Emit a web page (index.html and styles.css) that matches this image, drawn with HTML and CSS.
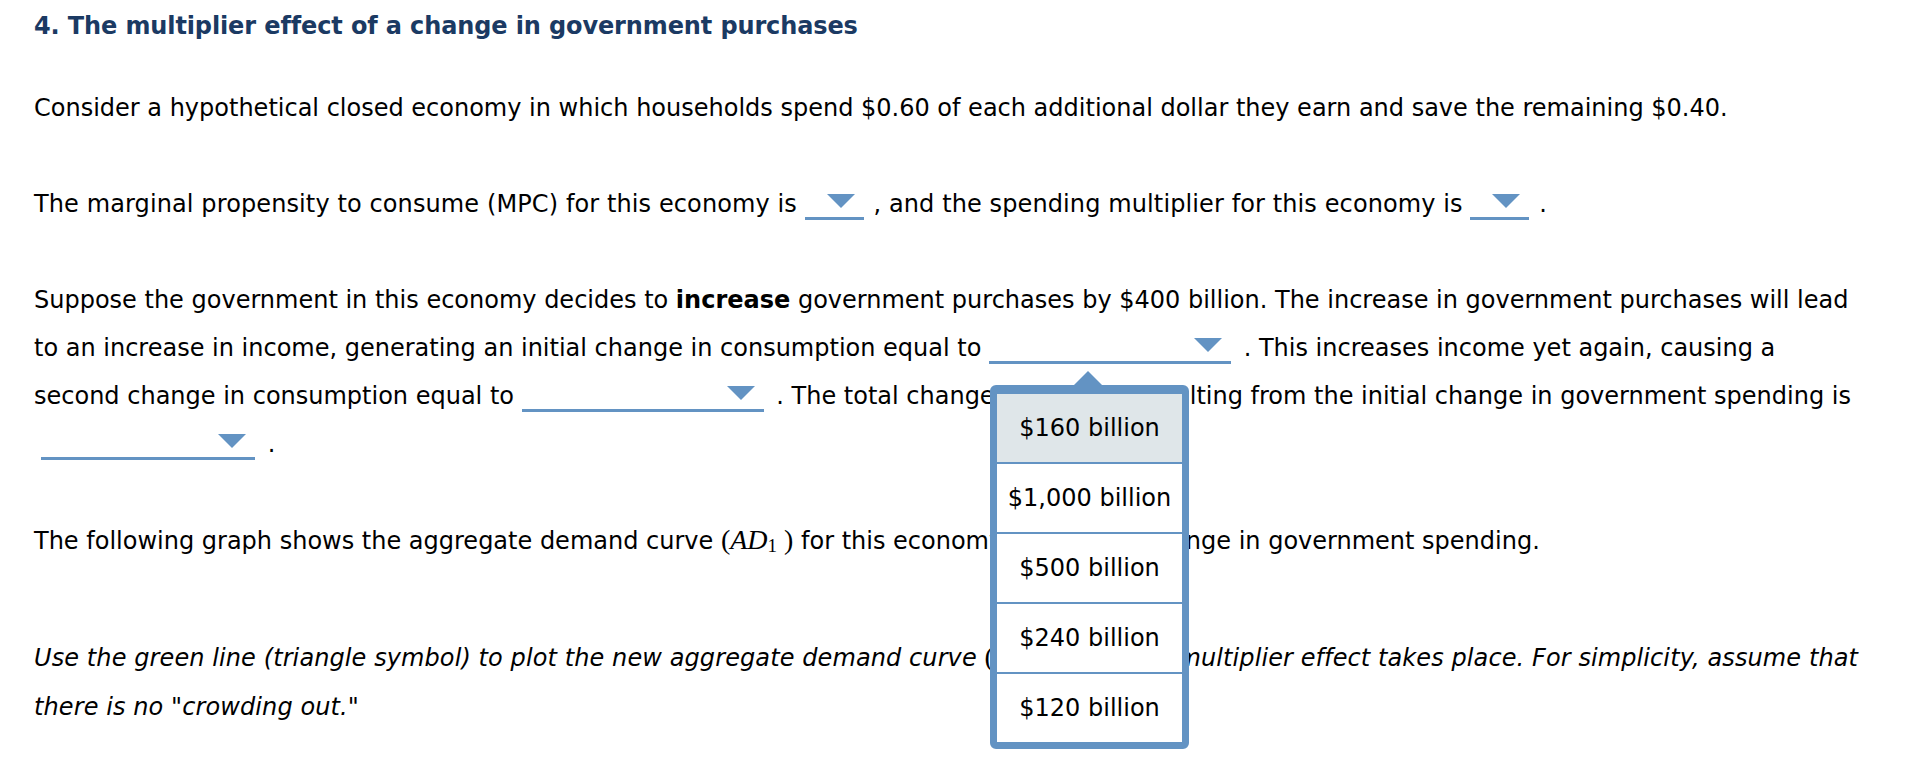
FILE: index.html
```html
<!DOCTYPE html>
<html lang="en">
<head>
<meta charset="utf-8">
<title>The multiplier effect of a change in government purchases</title>
<link rel="stylesheet" href="styles.css">
</head>
<body>
<main class="question">
  <h1 class="title">4. The multiplier effect of a change in government purchases</h1>

  <p class="para">Consider a hypothetical closed economy in which households spend $0.60 of each additional dollar they earn and save the remaining $0.40.</p>

  <p class="para para-mpc">The marginal propensity to consume (MPC) for this economy is <span class="dd dd-short"><span class="caret"></span></span> , and the spending multiplier for this economy is <span class="dd dd-short"><span class="caret"></span></span> .</p>

  <p class="para">Suppose the government in this economy decides to <b>increase</b> government purchases by $400 billion. The increase in government purchases will lead<br>to an increase in income, generating an initial change in consumption equal to <span class="dd dd-long dd-open"><span class="caret"></span><span class="popup"><span class="popup-arrow"></span><span class="opt opt-hover">$160 billion</span><span class="opt">$1,000 billion</span><span class="opt">$500 billion</span><span class="opt">$240 billion</span><span class="opt">$120 billion</span></span></span> . This increases income yet again, causing a<br>second change in consumption equal to <span class="dd dd-long"><span class="caret"></span></span> . The total change in demand resulting from the initial change in government spending is<br><span class="dd dd-mid"><span class="caret"></span></span> .</p>

  <p class="para">The following graph shows the aggregate demand curve <span class="math">(<i>AD</i><sub>1</sub><span class="math-close">)</span></span> for this economy before the change in government spending.</p>

  <p class="para para-italic">Use the green line (triangle symbol) to plot the new aggregate demand curve <span class="math">(<i>AD</i><sub>2</sub><span class="math-close">)</span></span> after the multiplier effect takes place. For simplicity, assume that<br>there is no "crowding out."</p>
</main>
</body>
</html>
```

FILE: styles.css
```css
html, body {
  margin: 0;
  padding: 0;
  background: #ffffff;
}

body {
  font-family: "DejaVu Sans", Verdana, sans-serif;
  font-size: 24px;
  color: #000000;
}

.question {
  padding: 2px 0 0 34px;
}

.title {
  margin: 0 0 34px 0;
  font-size: 24px;
  line-height: 48px;
  font-weight: bold;
  letter-spacing: -0.12px;
  color: #1b3a63;
}

.para {
  margin: 0 0 48px 0;
  line-height: 48px;
  white-space: nowrap;
}

.para-mpc {
  letter-spacing: 0.11px;
}

.para-italic {
  font-style: italic;
  margin-top: 67px;
  line-height: 49px;
  letter-spacing: 0.095px;
}

.para b {
  font-weight: bold;
}

.math {
  font-style: normal;
  font-family: "Liberation Serif", "Times New Roman", serif;
  font-size: 28px;
  letter-spacing: 0;
}

.math i {
  font-style: italic;
}

.math sub {
  font-size: 19px;
  vertical-align: -3px;
  line-height: 0;
}

.math-close {
  padding-left: 7px;
}

.dd {
  display: inline-flex;
  justify-content: flex-end;
  align-items: flex-start;
  box-sizing: border-box;
  height: 26px;
  padding-right: 9px;
  margin-right: 5px;
  border-bottom: 3px solid #6393c3;
  vertical-align: 4px;
  position: relative;
}

.dd-short { width: 59px; margin-right: 2px; }
.dd-long { width: 242px; }
.dd-mid { width: 214px; margin-left: 7px; }

.caret {
  width: 0;
  height: 0;
  border-left: 14px solid transparent;
  border-right: 14px solid transparent;
  border-top: 14px solid #6393c3;
}

.popup {
  position: absolute;
  left: 1px;
  top: calc(100% + 24px);
  z-index: 5;
  display: flex;
  flex-direction: column;
  width: 185px;
  border: 7px solid #6393c3;
  border-radius: 6px;
  background: #ffffff;
  letter-spacing: 0;
}

.popup-arrow {
  position: absolute;
  top: -21px;
  left: 77px;
  width: 0;
  height: 0;
  border-left: 14px solid transparent;
  border-right: 14px solid transparent;
  border-bottom: 14px solid #6393c3;
}

.opt {
  display: block;
  height: 68px;
  line-height: 68px;
  text-align: center;
  color: #000000;
  white-space: nowrap;
  border-top: 2px solid #6393c3;
}

.opt:first-of-type {
  border-top: none;
}

.opt-hover {
  background: #dfe6e9;
}
```
